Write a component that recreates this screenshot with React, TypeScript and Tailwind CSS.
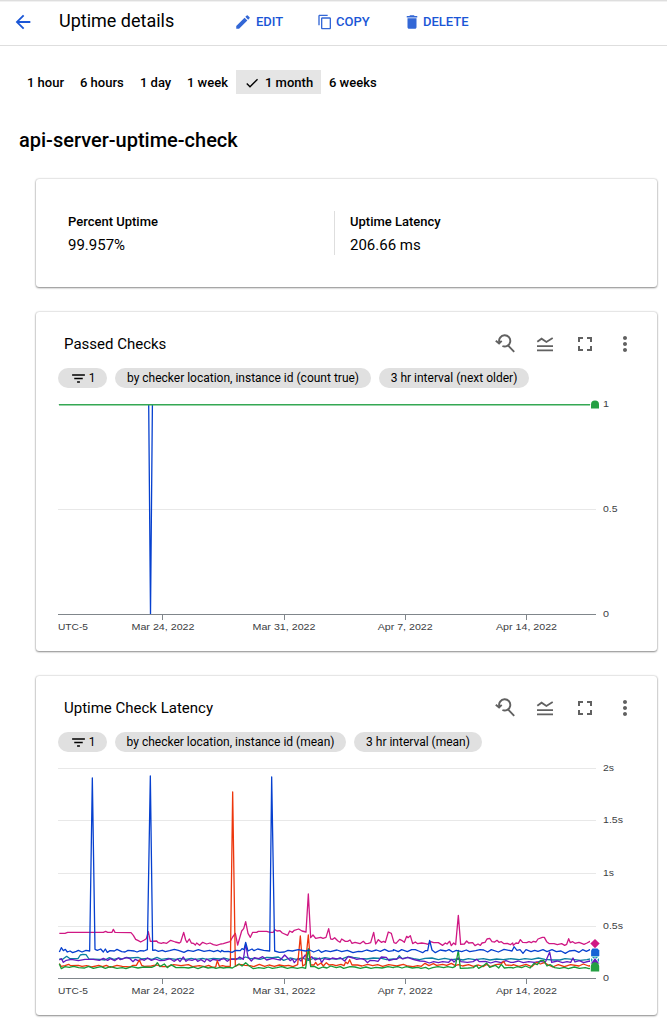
import type { ReactNode } from 'react';
import { MdArrowBack, MdCheck, MdContentCopy, MdDelete, MdEdit, MdFilterList, MdFullscreen, MdMoreVert } from 'react-icons/md';

type Segment = { dx: number; dy: number; points: string };

const ranges = [
  { label: '1 hour', width: 'w-[37px]', gap: 'ml-[27px]' },
  { label: '6 hours', width: 'w-[44px]', gap: 'ml-[16px]' },
  { label: '1 day', width: 'w-[31px]', gap: 'ml-[16px]' },
  { label: '1 week', width: 'w-[41px]', gap: 'ml-[16px]' },
];

function toPath(segments: Segment[]) {
  const pts = segments.flatMap(({ dx, dy, points }) =>
    points.split(' ').map((p) => {
      const [x, y] = p.split(',').map(Number);
      return `${((x + dx) / 3).toFixed(2)},${((y + dy) / 3).toFixed(2)}`;
    }),
  );
  return 'M' + pts.join('L');
}

const A = (points: string): Segment => ({ dx: 0, dy: 0, points });
const B = (points: string): Segment => ({ dx: 510, dy: -60, points });
const C = (points: string): Segment => ({ dx: 1020, dy: 0, points });
const D = (points: string): Segment => ({ dx: 1380, dy: 0, points });

const series = [
  {
    color: '#d01884',
    path: toPath([
      A('28,100 45,100 53,97 160,97 167,94 173,97 186,97 190,88 195,97 243,98 250,106 257,118 265,122 272,126 283,120 289,116 295,95 301,124 320,123 325,128 334,130 340,128 350,130 362,121 376,126 388,129 392,126 401,97 407,120 411,127 418,117 424,129 430,130 436,135 440,129 449,136 458,127 470,132 480,129 490,134 500,136 512,132'),
      B('10,191 22,187 30,185 38,171 46,160 53,195 65,153 71,146 77,125 84,160 91,172 98,157 110,157 115,154 140,154 150,157 160,157 164,149 171,153 180,152 187,159 203,166 209,153 217,157 223,151 236,147 246,153 258,156 265,42 272,173 279,165 287,175 302,172 309,175 318,172 326,146 332,177 338,178 344,173 353,182 360,187 365,177 376,184 383,184 390,180 396,190 405,187 420,191 430,184 437,191 445,190 452,188 461,157 467,192 475,179 484,187 491,184 496,187 505,156 514,160 522,188'),
      C('18,130 29,118 35,121 43,127 50,109 54,113 61,107 68,131 76,126 83,131 95,129 107,131 114,133 122,125 131,128 145,128 158,136 166,129 171,132 179,124 184,137 191,129 197,134 205,46 212,133 223,132 230,123 236,129 248,128 255,137 264,132 271,136 276,129 285,127 291,117 299,115 306,125 314,126 321,121 327,127 334,125 342,131 352,130 361,134 368,129'),
      D('10,136 18,129 25,130 31,119 38,127 50,128 57,125 64,128 70,124 78,126 84,117 97,112 103,112 110,125 118,131 132,131 142,134 155,131 164,136 170,133 176,116 181,128 188,125 195,130 207,127 217,131 222,133 231,129 240,124 255,131'),
    ]),
  },
  {
    color: '#0b7fa0',
    path: toPath([
      A('28,177 38,178 50,169 60,176 84,176 91,165 99,163 108,164 117,177 150,178 165,180 178,173 192,178 208,174 216,177 229,172 240,174 264,172 276,177 292,175 306,178 321,172 334,178 355,175 378,178 390,175 407,178 424,175 438,178 458,175 470,178 490,175 510,177'),
      B('10,234 28,238 45,236 63,237 77,231 90,236 104,235 120,238 140,232 157,233 175,231 191,241 210,234 229,238 247,234 265,241 283,234 300,237 315,233 331,236 348,237 370,235 386,229 400,232 420,235 440,237 460,234 485,235 500,239 520,237'),
      C('20,178 28,167 36,176 53,172 71,176 89,179 105,175 126,174 145,179 164,175 184,179 203,177 219,180 235,176 255,179 280,176 300,180 320,177 340,179 362,176'),
      D('10,177 28,179 45,176 65,178 85,174 105,178 129,180 150,180 165,176 188,178 211,181 231,179 255,174'),
    ]),
  },
  {
    color: '#6519c1',
    path: toPath([
      A('28,180 34,176 40,187 49,181 64,178 85,182 105,178 130,178 148,181 160,175 173,181 181,176 194,182 205,174 211,179 229,173 240,176 249,185 256,178 264,182 276,178 283,181 293,174 304,181 316,177 330,182 343,181 360,176 372,184 383,177 390,185 400,171 408,184 415,179 426,181 437,177 443,184 453,179 464,186 470,177 481,184 489,178 499,180 510,182'),
      B('0,239 13,236 22,244 32,237 48,239 59,231 70,238 77,192 84,231 94,243 103,233 116,236 128,230 140,240 158,235 171,238 181,240 194,225 211,242 217,236 223,248 234,235 243,243 256,225 265,238 275,230 286,240 299,234 305,248 313,236 328,239 337,234 350,237 361,233 374,243 384,230 399,234 410,238 425,236 435,240 442,248 451,241 464,242 474,244 484,231 499,232 507,242 520,238'),
      C('20,177 29,172 39,177 53,172 69,178 77,180 90,183 104,184 118,189 131,185 145,188 158,185 176,187 185,178 192,186 205,174 213,185 232,187 249,185 260,178 268,185 287,184 302,189 317,184 333,188 348,182 362,187'),
      D('10,187 25,183 40,188 56,185 73,187 91,184 106,187 119,156 125,187 142,183 158,188 171,185 182,187 189,174 195,186 208,182 221,188 239,183 255,185'),
    ]),
  },
  {
    color: '#ed360c',
    path: toPath([
      A('28,191 33,199 45,197 56,193 62,197 85,196 96,199 110,197 125,201 146,196 158,200 169,196 181,202 201,196 217,199 240,201 249,196 259,196 268,180 275,196 283,199 304,198 320,195 336,200 352,200 371,194 393,197 415,194 428,200 448,197 464,200 476,196 488,202 497,201 502,182 508,199 518,197 527,199 541,199 548,-324 556,199 567,193'),
      B('65,254 76,256 90,257 101,260 118,253 134,259 147,255 163,259 178,255 193,258 206,256 219,260 233,254 241,168 248,258 256,253 265,165 272,255 282,255 287,247 293,256 303,249 310,258 319,248 327,255 338,254 348,257 363,253 372,257 377,246 383,251 389,239 396,255 412,255 426,258 443,253 458,257 473,254 488,259 506,254 520,256'),
      C('20,198 40,193 53,198 69,200 83,197 94,199 105,190 117,197 130,191 140,196 158,193 170,196 184,190 196,197 205,194 218,198 236,194 250,199 265,195 279,200 290,193 301,200 318,194 333,192 341,184 347,195 366,196'),
      D('10,194 27,199 48,193 65,200 80,187 91,192 103,188 115,195 128,201 145,194 163,200 182,194 207,198 220,192 236,198 255,195'),
    ]),
  },
  {
    color: '#159b38',
    path: toPath([
      A('28,191 34,206 45,200 58,202 71,199 86,203 104,204 116,199 130,205 153,200 166,205 181,200 201,205 217,203 228,206 245,200 264,204 281,201 305,202 315,198 322,188 330,200 343,192 352,203 363,194 378,203 399,202 415,204 430,201 444,206 460,200 474,204 488,202 498,205 510,202'),
      B('10,264 25,262 37,264 57,252 66,258 77,248 88,258 100,266 116,263 132,265 145,261 157,265 171,263 185,260 202,265 216,262 232,265 246,262 257,265 265,206 272,260 283,259 296,266 309,261 321,264 332,258 349,263 361,260 371,265 390,260 405,261 421,265 438,261 453,265 468,262 486,264 504,260 520,263'),
      C('10,202 23,200 36,204 49,200 67,204 84,202 93,205 107,202 116,207 128,203 144,200 161,203 173,200 188,203 196,199 205,151 211,205 235,204 250,203 259,196 266,205 280,197 290,189 299,202 316,196 326,204 334,193 343,204 362,202'),
      D('10,204 22,200 35,203 47,198 60,204 72,190 82,194 91,182 101,181 111,198 120,194 134,203 149,205 163,202 175,206 193,201 208,205 226,203 237,206 255,203'),
    ]),
  },
  {
    color: '#0640cf',
    path: toPath([
      A('28,156 34,143 40,152 46,148 52,156 60,153 68,158 79,154 85,151 96,156 108,151 119,153 127,-366 135,148 142,151 152,147 160,156 166,147 172,157 180,152 193,153 201,148 215,155 225,156 234,151 253,153 261,156 271,152 282,153 292,149 301,-372 308,151 316,150 325,154 337,151 346,155 359,152 373,148 385,151 402,157 414,151 430,154 445,149 462,154 479,151 491,155 503,151 512,156'),
      B('5,211 12,215 25,214 36,217 47,211 61,212 66,206 72,209 77,187 84,213 96,207 102,212 113,207 131,211 149,213 155,-309 164,213 178,217 193,216 204,211 217,213 235,209 256,213 269,210 281,216 296,210 304,217 317,212 331,215 351,210 365,215 382,211 399,218 415,214 426,215 440,210 455,214 469,210 481,214 494,208 506,214 520,212'),
      C('10,149 25,155 35,149 52,155 65,149 76,149 86,153 98,158 106,152 113,152 119,121 126,150 136,158 151,150 168,153 177,149 188,156 199,151 215,155 229,150 239,155 257,152 270,149 281,150 293,156 304,149 325,156 342,148 366,153 372,141'),
      D('12,140 21,151 30,149 39,160 48,149 63,155 74,151 84,154 99,149 111,155 126,149 139,155 153,153 166,160 178,153 194,151 207,157 218,149 229,154 240,149 255,153'),
    ]),
  },
];

function ResetZoomIcon() {
  return (
    <svg className="h-6 w-6" viewBox="0 0 24 24" fill="none" stroke="currentColor" strokeWidth="1.9">
      <path d="M6.3 10.4A5.6 5.6 0 1 1 9.4 14M15.2 13.6 21.2 19.8" />
      <path d="m2.8 8.7 3.3 2.8 2.6-2.7" />
    </svg>
  );
}

function LegendIcon() {
  return (
    <svg className="h-6 w-6" viewBox="0 0 24 24" fill="none" stroke="currentColor" strokeWidth="1.8">
      <path d="M4 14.1h16M4 18.3h16" />
      <path d="m4.3 9.8 4.3-3.1 4.8 3.2L19.7 6" />
    </svg>
  );
}

function Chip({ children, className }: { children: ReactNode; className: string }) {
  return (
    <div className={`flex h-5 shrink-0 items-center justify-center whitespace-nowrap rounded-full bg-[#e0e0e0] text-[12px] leading-5 ${className}`}>
      {children}
    </div>
  );
}

function AxisLabel({ x, y, width, children }: { x: number; y: number; width: number; children: string }) {
  return (
    <text x={x} y={y} textLength={width} lengthAdjust="spacingAndGlyphs">
      {children}
    </text>
  );
}

function ChartAxis({ ticks, zeroY }: { ticks: [number, string, number][]; zeroY: number }) {
  return (
    <g>
      <g shapeRendering="crispEdges">
        {ticks.map(([y]) => (
          <rect key={y} x="58" y={y} width="538" height="1" fill="#e8e8e8" />
        ))}
        <rect x="58" y={zeroY} width="538" height="1" fill="#80868b" />
        {[162, 284, 405, 526].map((x) => (
          <rect key={x} x={x} y={zeroY} width="1" height="6" fill="#80868b" />
        ))}
      </g>
      <g fill="#3c4043" fontFamily="Liberation Sans, Arial, sans-serif" fontSize="9.5">
        {ticks.map(([y, label, width]) => (
          <AxisLabel key={label} x={603} y={y + 3} width={width}>{label}</AxisLabel>
        ))}
        <AxisLabel x={603} y={zeroY + 3} width={6}>0</AxisLabel>
        <AxisLabel x={58} y={zeroY + 16} width={30}>UTC-5</AxisLabel>
        <AxisLabel x={131.5} y={zeroY + 16} width={63}>Mar 24, 2022</AxisLabel>
        <AxisLabel x={252.5} y={zeroY + 16} width={63}>Mar 31, 2022</AxisLabel>
        <AxisLabel x={377.7} y={zeroY + 16} width={55}>Apr 7, 2022</AxisLabel>
        <AxisLabel x={496} y={zeroY + 16} width={61}>Apr 14, 2022</AxisLabel>
      </g>
    </g>
  );
}

function PassedChart() {
  return (
    <svg className="block h-[259px] w-[621px]" viewBox="36 388 621 259">
      <ChartAxis ticks={[[404, '1', 6], [509, '0.5', 14.5]]} zeroY={614} />
      <path d="M148.7 405L150.5 614L152.4 405" fill="none" stroke="#0640cf" strokeWidth="1.3" />
      <rect x="59" y="404" width="531" height="1.5" fill="#34a853" />
      <path d="M591 408.5v-4a4 4 0 0 1 8 0v4z" fill="#25a043" />
    </svg>
  );
}

function LatencyChart() {
  return (
    <svg className="block h-[259px] w-[621px]" viewBox="36 752 621 259">
      <ChartAxis ticks={[[768, '2s', 11], [820, '1.5s', 20], [873, '1s', 11], [926, '0.5s', 20]]} zeroY={978} />
      <g transform="translate(50 900)" fill="none" strokeWidth="1.3" strokeLinejoin="round">
        {series.map((s) => (
          <path key={s.color} d={s.path} stroke={s.color} />
        ))}
      </g>
      <rect x="590" y="938" width="10" height="36" fill="#fff" />
      <path d="m595 939 4.7 4.6-4.7 4.6-4.7-4.6z" fill="#d01884" />
      <path d="M592.5 948.5h5l1.8 2v5.5h-8.2v-5.5z" fill="#1763d5" />
      <path d="M591 956.5h8v7h-8z" fill="#169bb0" />
      <path d="m591 957 4 4 4-4" fill="none" stroke="#fff" strokeWidth="1.5" />
      <path d="m595 957.5 5 6.5h-10z" fill="#681abd" stroke="#fff" strokeWidth=".8" />
      <path d="M590.8 971.5v-5a4.2 4.2 0 0 1 8.4 0v5z" fill="#25a043" />
    </svg>
  );
}

function ChartCard({ title, chips, children }: { title: string; chips: [string, string][]; children: ReactNode }) {
  return (
    <section className="mb-[25px] ml-9 flex h-[339px] w-[621px] flex-col rounded-[3px] bg-white shadow-[0_1px_2px_rgba(0,0,0,0.4),0_0_2px_rgba(0,0,0,0.3)]">
      <header className="flex h-[56px] shrink-0 items-start justify-between pl-7 pr-5 pt-5">
        <h2 className="text-[15px] leading-6">{title}</h2>
        <div className="flex gap-4 text-[#616161]">
          <ResetZoomIcon />
          <LegendIcon />
          <MdFullscreen className="h-6 w-6" />
          <MdMoreVert className="h-6 w-6" />
        </div>
      </header>
      <div className="flex h-[20px] shrink-0 gap-2 pl-[22px]">
        <Chip className="w-[49px] gap-[2px]">
          <MdFilterList className="h-[17px] w-[17px]" />
          <span>1</span>
        </Chip>
        {chips.map(([label, width]) => (
          <Chip key={label} className={width}>{label}</Chip>
        ))}
      </div>
      {children}
    </section>
  );
}

export default function App() {
  return (
    <main className="h-[1032px] w-[667px] overflow-hidden bg-white font-['Roboto',sans-serif] text-black">
      <header className="flex h-[46px] items-center border-b border-t border-b-[#dedede] border-t-[#dedede] pb-[2px] text-[13px] font-medium text-[#1a56d6] shadow-[inset_0_1px_0_#f1f1f1]">
        <MdArrowBack className="ml-3 h-[22px] w-[22px] shrink-0" />
        <h1 className="ml-[25px] w-[175px] shrink-0 pb-[2px] text-[18px] font-normal leading-6 text-black">Uptime details</h1>
        <div className="flex w-[83px] shrink-0 items-center gap-1">
          <MdEdit className="h-[18px] w-[18px] text-[#3367d6]" />
          <span>EDIT</span>
        </div>
        <div className="flex w-[86px] shrink-0 items-center gap-[3px]">
          <MdContentCopy className="h-4 w-4 text-[#3367d6]" />
          <span>COPY</span>
        </div>
        <div className="flex shrink-0 items-center gap-[2px]">
          <MdDelete className="h-[18px] w-[18px] text-[#3367d6]" />
          <span>DELETE</span>
        </div>
      </header>
      <nav className="mt-6 flex h-6 items-center whitespace-nowrap text-[13px] font-medium">
        {ranges.map((r) => (
          <span key={r.label} className={`pt-px ${r.width} ${r.gap}`}>{r.label}</span>
        ))}
        <span className="ml-2 flex h-6 w-[85px] items-center gap-[5px] bg-[#e5e5e5] pl-2 pt-px">
          <MdCheck className="h-4 w-4" />
          1 month
        </span>
        <span className="ml-2 pt-px">6 weeks</span>
      </nav>
      <h2 className="ml-[19px] mt-8 text-[20px] font-medium leading-7">api-server-uptime-check</h2>
      <section className="mb-[25px] ml-9 mt-[25px] flex h-[108px] w-[621px] rounded-[3px] bg-white px-8 pt-8 shadow-[0_1px_2px_rgba(0,0,0,0.4),0_0_2px_rgba(0,0,0,0.3)]">
        <div className="h-[44px] w-[267px] border-r border-[#dedede]">
          <div className="text-[13px] font-medium leading-[22px]">Percent Uptime</div>
          <div className="text-[15px] leading-6">99.957%</div>
        </div>
        <div className="ml-[15px]">
          <div className="text-[13px] font-medium leading-[22px]">Uptime Latency</div>
          <div className="text-[15px] leading-6">206.66 ms</div>
        </div>
      </section>
      <ChartCard title="Passed Checks" chips={[["by checker location, instance id (count true)", "w-[256px]"], ["3 hr interval (next older)", "w-[150px]"]]}>
        <PassedChart />
      </ChartCard>
      <ChartCard title="Uptime Check Latency" chips={[["by checker location, instance id (mean)", "w-[231px]"], ["3 hr interval (mean)", "w-[128px]"]]}>
        <LatencyChart />
      </ChartCard>
    </main>
  );
}
